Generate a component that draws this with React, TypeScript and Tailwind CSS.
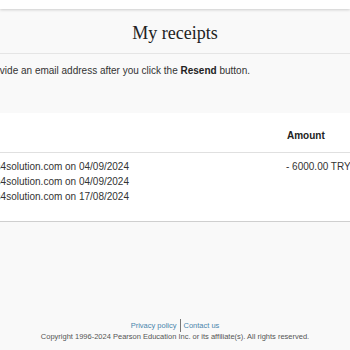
export default function App() {
  return (
    <div className="w-[350px] h-[350px] overflow-hidden bg-[#f9f9f9] font-['Liberation_Sans',Arial,sans-serif] text-[10px] text-[#333] flex flex-col">
      <div className="h-[9px] shrink-0 bg-white shadow-[0_1px_3px_rgba(0,0,0,0.18)]" />

      <div className="pt-[14px] pb-[10px] border-b border-[#e5e5e5]">
        <h1 className="text-center font-['Liberation_Serif','Times_New_Roman',serif] text-[18px] leading-[20px] text-[#222]">
          My receipts
        </h1>
      </div>

      <div className="pt-[10px] h-[59px]">
        <div className="w-[250px] flex justify-end whitespace-nowrap leading-[14px]">
          <span className="shrink-0">
            You will be asked to provide an email address after you click the{' '}
            <b className="font-bold text-[#222]">Resend</b> button.
          </span>
        </div>
      </div>

      <div className="bg-white border-b border-[#cfcfcf]">
        <div className="h-[40px] flex items-end pb-[9px] border-b border-[#e0e0e0]">
          <div className="w-[287px] shrink-0" />
          <div className="font-bold text-[#222] leading-[14px]">Amount</div>
        </div>
        <div className="flex pt-[6px] pb-[17px]">
          <div className="w-[129px] shrink-0 flex flex-col items-end whitespace-nowrap leading-[15px]">
            <span>receipts@pearsons4solution.com on 04/09/2024</span>
            <span>receipts@pearsons4solution.com on 04/09/2024</span>
            <span>receipts@pearsons4solution.com on 17/08/2024</span>
          </div>
          <div className="w-[157px] shrink-0" />
          <div className="whitespace-nowrap leading-[15px]">- 6000.00 TRY</div>
        </div>
      </div>

      <div className="mt-auto pb-[8px] text-center">
        <div className="text-[7.5px] leading-[12px] text-[#4a86ad] flex justify-center items-center">
          <span>Privacy policy</span>
          <span className="mx-[3px] h-[13px] border-l border-[#777]" />
          <span>Contact us</span>
        </div>
        <div className="text-[7.5px] leading-[10px] text-[#555]">
          Copyright 1996-2024 Pearson Education Inc. or its affiliate(s). All rights reserved.
        </div>
      </div>
    </div>
  )
}
